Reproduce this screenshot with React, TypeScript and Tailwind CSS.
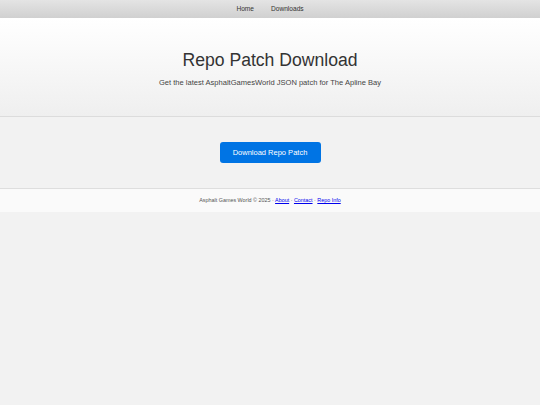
export default function App() {
  return (
    <div
      className="min-h-screen bg-[#f2f2f2] text-[#333]"
      style={{ fontFamily: '"Liberation Sans", Arial, sans-serif' }}
    >
      <nav className="h-[18px] flex items-center justify-center gap-[17px] bg-gradient-to-b from-[#e4e4e4] to-[#d0d0d0] text-[6.6px] text-[#333]">
        <a href="#">Home</a>
        <a href="#">Downloads</a>
      </nav>
      <header className="h-[99px] flex flex-col items-center bg-gradient-to-b from-white to-[#efefef] border-b border-[#dcdcdc]">
        <h1 className="mt-[34px] text-[17.6px] leading-none">Repo Patch Download</h1>
        <p className="mt-[7px] text-[7.56px] text-[#444]">
          Get the latest AsphaltGamesWorld JSON patch for The Apline Bay
        </p>
      </header>
      <main className="h-[71px] flex items-center justify-center">
        <button className="w-[101px] h-[21px] rounded-[3px] bg-[#0074e4] text-white text-[7.5px]">
          Download Repo Patch
        </button>
      </main>
      <footer className="h-[24px] flex items-center justify-center bg-[#fafafa] border-t border-[#dedede] text-[5.4px] text-[#555]">
        <span>
          Asphalt Games World © 2025 ·{" "}
          <a href="#" className="text-[#0000ee] underline">About</a> ·{" "}
          <a href="#" className="text-[#0000ee] underline">Contact</a> ·{" "}
          <a href="#" className="text-[#0000ee] underline">Repo Info</a>
        </span>
      </footer>
    </div>
  );
}
